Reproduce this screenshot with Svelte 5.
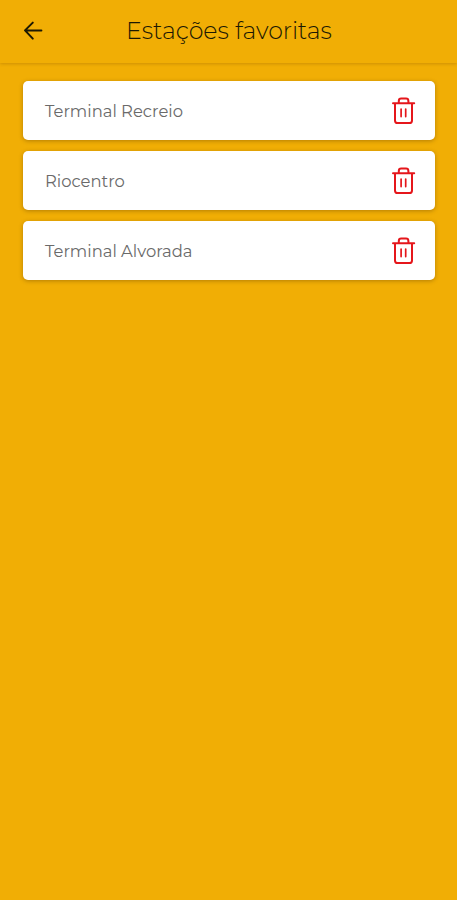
<script>
  let stations = $state(['Terminal Recreio', 'Riocentro', 'Terminal Alvorada']);

  const remove = (name) => {
    stations = stations.filter((s) => s !== name);
  };
</script>

<main class="screen">
  <header class="bar">
    <button class="back" aria-label="Voltar">
      <svg width="20" height="20" viewBox="0 0 20 20" fill="none" stroke="#1c1903" stroke-width="2" stroke-linecap="round" stroke-linejoin="round">
        <path d="M18.4 9.4H2.4M9.8 1.6L2 9.4l7.8 8.2" />
      </svg>
    </button>
    <h1>Estações favoritas</h1>
  </header>

  <ul class="list">
    {#each stations as name (name)}
      <li class="card">
        <span class="name">{name}</span>
        <button class="remove" aria-label="Remover" onclick={() => remove(name)}>
          <svg width="24" height="28" viewBox="0 0 24 28" fill="none" stroke="#e5161b" stroke-width="2" stroke-linecap="round" stroke-linejoin="round">
            <path d="M1 6.2h21.2M3 6.4v17a2.6 2.6 0 0 0 2.6 2.6h11.8a2.6 2.6 0 0 0 2.6-2.6v-17M6.8 5.8V4a2.4 2.4 0 0 1 2.4-2.4H14A2.4 2.4 0 0 1 16.4 4v1.8" />
            <path stroke-width="1.7" d="M9.1 12v7.6M13.7 12v7.6" />
          </svg>
        </button>
      </li>
    {/each}
  </ul>
</main>

<style>
  :global(body) {
    margin: 0;
    background: #f1ae05;
  }

  .screen {
    min-height: 900px;
    background: #f1ae05;
    font-family: Montserrat, Inter, 'Open Sans', sans-serif;
  }

  .bar {
    box-sizing: border-box;
    display: grid;
    grid-template-columns: 66px 1fr 66px;
    align-items: center;
    height: 63px;
    padding-bottom: 2px;
    box-shadow: 0 1px 3px rgba(120, 70, 0, 0.28);
  }

  button {
    display: flex;
    padding: 0;
    border: 0;
    background: none;
  }

  .back {
    justify-self: center;
  }

  .remove {
    padding-top: 1.5px;
  }

  h1 {
    margin: 0;
    padding-left: 1px;
    text-align: center;
    white-space: nowrap;
    font-size: 23.7px;
    font-weight: 300;
    line-height: 30px;
    color: #1c1903;
  }

  .list {
    display: flex;
    flex-direction: column;
    gap: 11.5px;
    margin: 0;
    padding: 18px 22px 0 23px;
    list-style: none;
  }

  .card {
    box-sizing: border-box;
    display: flex;
    align-items: center;
    justify-content: space-between;
    height: 58.5px;
    padding: 0 19px 0 22px;
    border-radius: 5px;
    background: #fff;
    box-shadow: 0 1px 4px rgba(90, 55, 0, 0.4);
  }

  .name {
    padding-top: 1px;
    font-size: 16.4px;
    font-weight: 400;
    line-height: 24px;
    white-space: nowrap;
    color: #6a6a6a;
  }
</style>
